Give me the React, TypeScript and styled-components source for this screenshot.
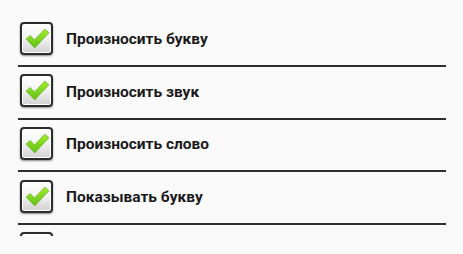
import React from "react";
import styled, { createGlobalStyle } from "styled-components";

const Global = createGlobalStyle`
  html, body { margin: 0; padding: 0; background: #fafafa; }
  body { width: 463px; height: 254px; overflow: hidden; font-family: Roboto, "Noto Sans", sans-serif; }
`;

const Screen = styled.div`
  width: 463px;
  height: 254px;
  background: #fafafa;
  padding: 14.33px 17px 0 18px;
  box-sizing: border-box;
`;

const List = styled.div`
  height: 222px;
  overflow: hidden;
  display: flex;
  flex-direction: column;
`;

const Row = styled.div`
  flex: 0 0 auto;
  height: 52.67px;
  box-sizing: border-box;
  display: flex;
  align-items: center;
  gap: 13px;
  padding: 0 0 0 2px;
  border-bottom: 2px solid #2e2e2e;
`;

const Box = styled.div`
  flex: 0 0 auto;
  width: 29px;
  height: 29px;
  margin-bottom: 3px;
  border: 2px solid #2c2c2c;
  border-radius: 4px;
  background: linear-gradient(#ffffff 0%, #f4f4f4 45%, #d2d2d2 100%);
  box-shadow: 0 1px 2px rgba(0, 0, 0, 0.45), inset 0 0 0 1px #fff;
  display: flex;
  align-items: center;
  justify-content: center;
`;

const Label = styled.span`
  font-family: Roboto, "Noto Sans", sans-serif;
  font-weight: 700;
  font-size: 15.5px;
  color: #1a1a1a;
  line-height: 1;
`;

const Check = () => (
  <svg width="28" height="25" viewBox="0 0 26 24">
    <defs>
      <linearGradient id="g" x1="0" y1="0" x2="0" y2="1">
        <stop offset="0" stopColor="#a4ec2e" />
        <stop offset="1" stopColor="#62c016" />
      </linearGradient>
    </defs>
    <path
      d="M2.5 12.5 L6.5 9 L10.5 13.5 L20.5 3 L24.5 6.5 L10.8 21 Z"
      fill="url(#g)"
      stroke="#5aad12"
      strokeWidth="0.6"
      strokeLinejoin="round"
    />
  </svg>
);

const items = [
  "Произносить букву",
  "Произносить звук",
  "Произносить слово",
  "Показывать букву",
  "Показывать картинку",
];

export default function App() {
  return (
    <>
      <Global />
      <Screen>
        <List>
          {items.map((t) => (
            <Row key={t}>
              <Box>
                <Check />
              </Box>
              <Label>{t}</Label>
            </Row>
          ))}
        </List>
      </Screen>
    </>
  );
}
